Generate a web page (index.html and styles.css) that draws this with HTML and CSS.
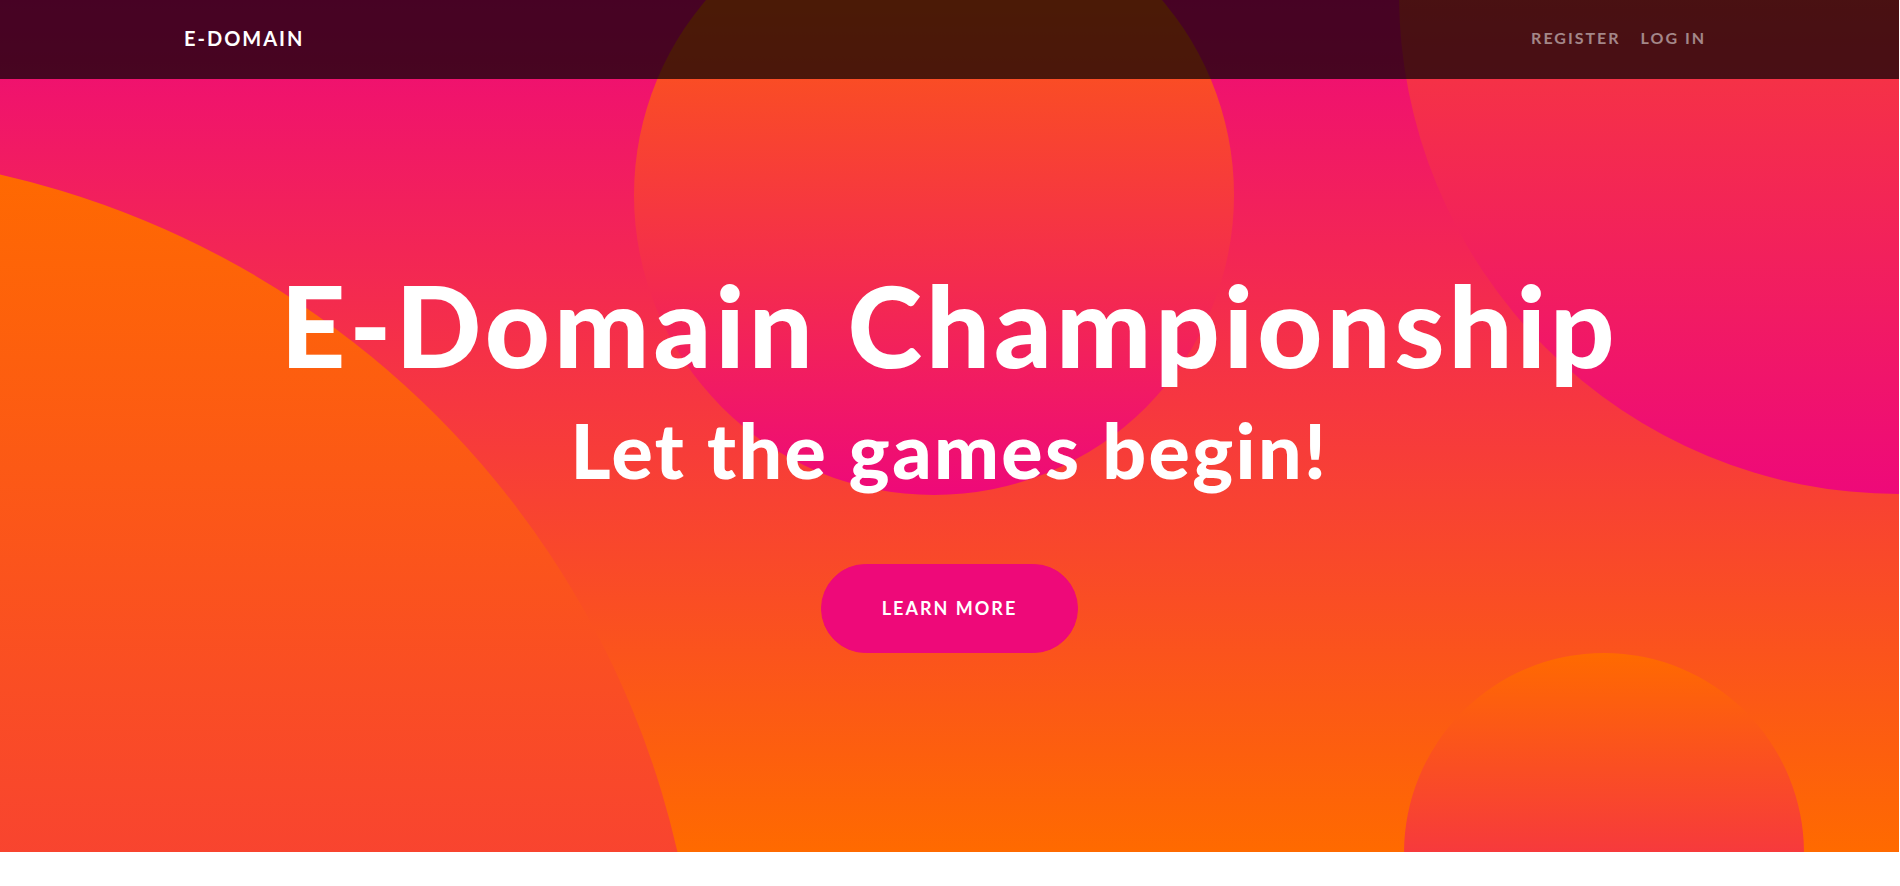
FILE: index.html
```html
<!DOCTYPE html>
<html lang="en">
<head>
<meta charset="utf-8">
<title>E-Domain Championship</title>
<link rel="stylesheet" href="styles.css">
</head>
<body>
<div class="page">
  <nav class="navbar">
    <div class="nav-inner">
      <a class="brand" href="#">E-Domain</a>
      <ul class="nav-links">
        <li><a href="#">Register</a></li>
        <li><a href="#">Log In</a></li>
      </ul>
    </div>
  </nav>
  <header class="masthead">
    <div class="masthead-content">
      <h1 class="heading">E-Domain Championship</h1>
      <h2 class="subheading">Let the games begin!</h2>
      <a class="btn-learn" href="#">Learn More</a>
    </div>
    <div class="bg-circle circle-1"></div>
    <div class="bg-circle circle-2"></div>
    <div class="bg-circle circle-3"></div>
    <div class="bg-circle circle-4"></div>
  </header>
  <main class="after"></main>
</div>
</body>
</html>
```

FILE: styles.css
```css
html, body {
  margin: 0;
  padding: 0;
  background: #fff;
}

body {
  font-family: "Lato", "Liberation Sans", sans-serif;
  color: #fff;
}

.page {
  position: relative;
  margin-right: 1px;
}

.navbar {
  position: absolute;
  top: 0;
  left: 0;
  right: 0;
  z-index: 10;
  height: 79px;
  box-sizing: border-box;
  padding-bottom: 4px;
  background: rgba(0, 0, 0, 0.7);
  display: flex;
  align-items: center;
}

.nav-inner {
  width: 1531px;
  margin: 0 auto;
  display: flex;
  align-items: center;
  justify-content: space-between;
}

.brand {
  color: #fff;
  text-decoration: none;
  text-transform: uppercase;
  font-size: 20px;
  font-weight: 700;
  letter-spacing: 2px;
}

.nav-links {
  list-style: none;
  margin: 0;
  padding: 0;
  display: flex;
}

.nav-links a {
  display: block;
  padding: 0 10px;
  color: rgba(255, 255, 255, 0.5);
  text-decoration: none;
  text-transform: uppercase;
  font-size: 16px;
  font-weight: 700;
  letter-spacing: 2px;
}

.nav-links li:last-child a {
  padding-right: 9px;
}

.masthead {
  position: relative;
  overflow: hidden;
  height: 852px;
  box-sizing: border-box;
  padding-top: 257px;
  text-align: center;
  background: linear-gradient(0deg, #ff6a00 0%, #ee0979 100%);
}

.masthead-content {
  position: relative;
  z-index: 2;
  display: flex;
  flex-direction: column;
  align-items: center;
}

.heading {
  margin: 0;
  font-size: 113px;
  line-height: 1.2;
  font-weight: 900;
  letter-spacing: 4px;
}

.subheading {
  margin: 10px 0 0;
  font-size: 77px;
  line-height: 1.2;
  font-weight: 900;
  letter-spacing: 2.4px;
}

.btn-learn {
  margin-top: 69px;
  display: inline-block;
  padding: 30px 60px;
  border: 1px solid #ee0979;
  border-radius: 100px;
  background: #ee0979;
  color: #fff;
  text-decoration: none;
  text-transform: uppercase;
  font-size: 18px;
  line-height: 27px;
  font-weight: 700;
  letter-spacing: 2px;
}

.bg-circle {
  position: absolute;
  z-index: 1;
  border-radius: 50%;
  background: linear-gradient(0deg, #ee0979 0%, #ff6a00 100%);
}

.circle-1 {
  width: 1800px;
  height: 1800px;
  left: -1100px;
  top: 152px;
}

.circle-2 {
  width: 1000px;
  height: 1000px;
  right: -500px;
  top: -506px;
}

.circle-3 {
  width: 400px;
  height: 400px;
  right: 5%;
  top: 653px;
}

.circle-4 {
  width: 600px;
  height: 600px;
  right: 35%;
  top: -105px;
}

.after {
  height: 34px;
}
```
